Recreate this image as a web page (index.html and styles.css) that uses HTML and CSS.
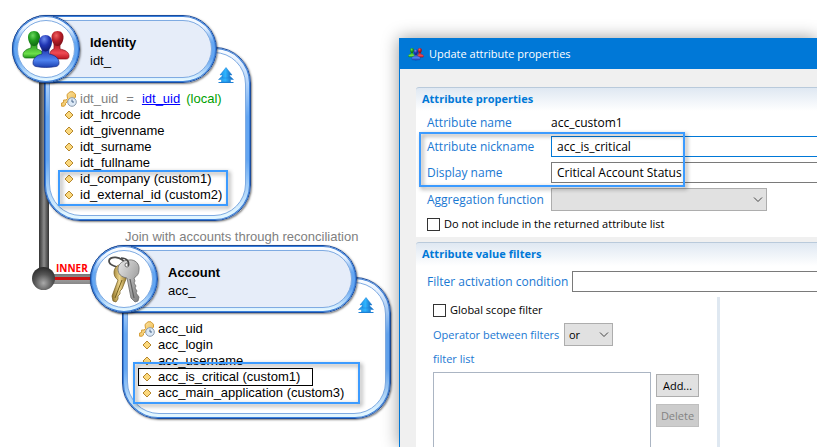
FILE: index.html
```html
<!DOCTYPE html>
<html lang="en">
<head>
<meta charset="utf-8">
<title>Update attribute properties</title>
<link rel="stylesheet" href="styles.css">
</head>
<body>
<svg class="defs" aria-hidden="true">
  <defs>
    <radialGradient id="gG" cx=".4" cy=".3" r=".8"><stop offset="0" stop-color="#6bd860"/><stop offset=".45" stop-color="#1f9a1c"/><stop offset="1" stop-color="#0c5a10"/></radialGradient>
    <radialGradient id="gR" cx=".4" cy=".3" r=".8"><stop offset="0" stop-color="#f06060"/><stop offset=".45" stop-color="#b81e28"/><stop offset="1" stop-color="#6d0a12"/></radialGradient>
    <radialGradient id="gB" cx=".4" cy=".25" r=".85"><stop offset="0" stop-color="#6d8cf0"/><stop offset=".45" stop-color="#2136b4"/><stop offset="1" stop-color="#0c1560"/></radialGradient>
    <linearGradient id="tG" x1="0" y1="0" x2="0" y2="1"><stop offset="0" stop-color="#2a9a22"/><stop offset=".7" stop-color="#6de04a"/><stop offset="1" stop-color="#1f8f1a"/></linearGradient>
    <linearGradient id="tR" x1="0" y1="0" x2="0" y2="1"><stop offset="0" stop-color="#b31824"/><stop offset=".6" stop-color="#f04a54"/><stop offset="1" stop-color="#b81420"/></linearGradient>
    <linearGradient id="tB" x1="0" y1="0" x2="0" y2="1"><stop offset="0" stop-color="#2038b0"/><stop offset=".6" stop-color="#4f83f0"/><stop offset="1" stop-color="#1c40b0"/></linearGradient>
    <linearGradient id="arrow" x1="0" y1="0" x2="1" y2="0"><stop offset="0" stop-color="#1c8ee0"/><stop offset=".45" stop-color="#2fb4ff"/><stop offset="1" stop-color="#1463b8"/></linearGradient>
    <linearGradient id="gold" x1="0" y1="0" x2="1" y2="1"><stop offset="0" stop-color="#fff0b8"/><stop offset="1" stop-color="#e9ae3c"/></linearGradient>
    <linearGradient id="silver" x1="0" y1="0" x2="1" y2="1"><stop offset="0" stop-color="#e8e8e8"/><stop offset=".5" stop-color="#b4b4b4"/><stop offset="1" stop-color="#7e7e7e"/></linearGradient>
    <linearGradient id="brass" x1="0" y1="0" x2="1" y2="0"><stop offset="0" stop-color="#8f7226"/><stop offset=".5" stop-color="#ecd48c"/><stop offset="1" stop-color="#8f7226"/></linearGradient>
    <symbol id="people" viewBox="0 0 48 38">
      <path d="M32 14h6v5c5 1 9 3 9 7 0 2-1 3-3 3H27c1-6 1-9 5-10z" fill="url(#tR)" stroke="#8e1019" stroke-width=".7"/>
      <path d="M35.500 1c4 0 6 3 6 6 0 4-2 9-6 9s-6-5-6-9C29.500 4 31.500 1 35.500 1z" fill="url(#gR)"/>
      <path d="M9 14h6v5c4 1 7 4 7 9H4c-2 0-3-1-3-3 0-4 4-6 8-7z" fill="url(#tG)" stroke="#11700f" stroke-width=".7"/>
      <path d="M12 1c4 0 6 3 6 6 0 4-2 9-6 9s-6-5-6-9C6 4 8 1 12 1z" fill="url(#gG)"/>
      <path d="M20 19h7v5c6 1 10 4 10 9 0 2-1 3-3 3.500-7 1.300-14 1.300-20 0-2-.5-3-1.500-3-3.500 0-5 4-8 9-9z" fill="url(#tB)" stroke="#152a84" stroke-width=".7"/>
      <path d="M23.500 5c4 0 6.500 3 6.500 6.500 0 5-3.300 10-6.500 10s-6.500-5-6.500-10C17 8 19.500 5 23.500 5z" fill="url(#gB)"/>
    </symbol>
    <symbol id="keys" viewBox="0 0 36 50">
      <path d="M21 11C15 1 3 2 3 7c0 4 9 8 19 6" fill="none" stroke="#4c4c4c" stroke-width="1.800"/>
      <path d="M13 11c-6 2-7 11-1 15L6 42l1 5 3 1 2-3v-3l2-2v-3l2-2 4-10 1-12z" fill="url(#brass)" stroke="#71591c" stroke-width=".7"/>
      <path d="M16 26L9 44" stroke="#75601e"/>
      <path d="M23 6c6-1 11 4 10 10 0 4-2 6-5 8l1 3-1 2 2 3-1 2 2 3-1 2 3 4-1 4-3 1-4-4-4-20c-6-1-9-4-9-9 0-5 5-9 11-9z" fill="url(#silver)" stroke="#6c6c6c" stroke-width=".8"/>
      <path d="M24 25l4 19" stroke="#5f5f5f" stroke-width="1.200"/>
      <circle cx="21" cy="11" r="2" fill="#fff" stroke="#555" stroke-width=".8"/>
      <path d="M15 4c6 0 9 4 7 8" fill="none" stroke="#444" stroke-width="1.500"/>
    </symbol>
    <symbol id="up" viewBox="0 0 16 16">
      <path d="M8 5.500l7.500 7H12.500V15H3.500v-2.500H.5z" fill="url(#arrow)" stroke="#1c7fd4" stroke-width=".5"/>
      <path d="M8 .5L14 8H11.500v3H4.500V8H2z" fill="url(#arrow)" stroke="#1c7fd4" stroke-width=".5"/>
      <path d="M.5 15.500h15" stroke="#1c7fd4"/>
    </symbol>
    <symbol id="diamond" viewBox="0 0 16 16">
      <path d="M8 4l4 4-4 4-4-4z" fill="#fbd87c" stroke="#b5862c" stroke-linejoin="round"/>
    </symbol>
    <symbol id="keyclock" viewBox="0 0 16 16">
      <path d="M6 3.500L9 .8h3l2.500 2.500v3L12 8H9l-4.500 4.500V14L3 15.200H.6V12l2-.5V9h2.500L6.500 7.500z" fill="url(#gold)" stroke="#d59c33"/>
      <circle cx="11" cy="11" r="4.300" fill="#dce9f6" stroke="#8a9aad"/>
      <path d="M11 8.500V11h2" fill="none" stroke="#47648a"/>
    </symbol>
  </defs>
</svg>

<main class="canvas">
  <div class="pipe pipe-down"></div>
  <div class="pipe pipe-across"></div>
  <div class="joint"></div>
  <span class="join-type">INNER</span>
  <span class="join-note">Join with accounts through reconciliation</span>

  <section class="node identity">
    <div class="shell head">
      <header class="shell-in title"><h2>Identity</h2><p>idt_</p></header>
    </div>
    <div class="shell badge"><div class="shell-in"><svg class="people"><use href="#people"/></svg></div></div>
    <div class="shell body">
      <div class="shell-in">
        <svg class="up"><use href="#up"/></svg>
        <ul>
          <li><svg><use href="#keyclock"/></svg><span class="muted">idt_uid</span><span class="eq">=</span><a href="#idt_uid">idt_uid</a><span class="local">(local)</span></li>
          <li><svg><use href="#diamond"/></svg>idt_hrcode</li>
          <li><svg><use href="#diamond"/></svg>idt_givenname</li>
          <li><svg><use href="#diamond"/></svg>idt_surname</li>
          <li><svg><use href="#diamond"/></svg>idt_fullname</li>
          <li><svg><use href="#diamond"/></svg>id_company (custom1)</li>
          <li><svg><use href="#diamond"/></svg>id_external_id (custom2)</li>
        </ul>
      </div>
    </div>
  </section>

  <section class="node account">
    <div class="shell head">
      <header class="shell-in title"><h2>Account</h2><p>acc_</p></header>
    </div>
    <div class="shell badge"><div class="shell-in"><svg class="keys"><use href="#keys"/></svg></div></div>
    <div class="shell body">
      <div class="shell-in">
        <svg class="up"><use href="#up"/></svg>
        <ul>
          <li><svg><use href="#keyclock"/></svg>acc_uid</li>
          <li><svg><use href="#diamond"/></svg>acc_login</li>
          <li><svg><use href="#diamond"/></svg>acc_username</li>
          <li class="selected"><svg><use href="#diamond"/></svg>acc_is_critical (custom1)</li>
          <li><svg><use href="#diamond"/></svg>acc_main_application (custom3)</li>
        </ul>
      </div>
    </div>
  </section>

  <div class="mark mark-identity"></div>
  <div class="mark mark-account"></div>
</main>

<form class="dialog">
  <header class="titlebar"><svg><use href="#people"/></svg><h1>Update attribute properties</h1></header>
  <div class="content">
    <section class="group">
      <h2>Attribute properties</h2>
      <div class="fields">
        <span class="caption">Attribute name</span><span class="value">acc_custom1</span>
        <label for="nick">Attribute nickname</label><input id="nick" class="text focus" type="text" value="acc_is_critical">
        <label for="disp">Display name</label><input id="disp" class="text" type="text" value="Critical Account Status">
        <label for="agg">Aggregation function</label>
        <div class="pick wide"><select id="agg"><option></option></select><svg viewBox="0 0 10 6"><path d="M1 .5l4 4 4-4"/></svg></div>
        <div class="check"><input id="skip" type="checkbox"><label for="skip">Do not include in the returned attribute list</label></div>
      </div>
    </section>
    <section class="group filters">
      <h2>Attribute value filters</h2>
      <div class="condition"><label for="cond">Filter activation condition</label><input id="cond" class="text" type="text"></div>
      <div class="split">
        <div class="pane">
          <div class="check"><input id="global" type="checkbox"><label for="global">Global scope filter</label></div>
          <div class="operator"><label for="op">Operator between filters</label>
            <div class="pick"><select id="op"><option>or</option><option>and</option></select><svg viewBox="0 0 10 6"><path d="M1 .5l4 4 4-4"/></svg></div>
          </div>
          <label for="list">filter list</label>
          <div class="listing">
            <select id="list" size="5"></select>
            <div class="buttons"><button type="button">Add...</button><button type="button" disabled>Delete</button></div>
          </div>
        </div>
      </div>
    </section>
  </div>
  <div class="mark mark-fields"></div>
</form>
</body>
</html>
```
FILE: styles.css
```css
* { box-sizing: border-box; }
body {
  margin: 0;
  min-height: 100vh;
  position: relative;
  overflow: hidden;
  background: #fff;
  color: #000;
  font: 13px/16px "Liberation Sans", Arial, sans-serif;
}
h1, h2, p, ul { margin: 0; padding: 0; }
.defs { position: absolute; width: 0; height: 0; }

/* Diagram canvas */
.canvas { position: absolute; inset: 0; }
.pipe { position: absolute; }
.pipe-down {
  left: 39px; top: 70px; width: 10px; height: 200px;
  background: linear-gradient(90deg, #333 0, #555 20%, #8c8c8c 50%, #555 80%, #333 100%);
}
.pipe-across {
  left: 50px; top: 274px; width: 50px; height: 10px;
  background: linear-gradient(#777 0, #888 30%, #d01010 31%, #d01010 60%, #999 61%, #888 100%);
}
.joint {
  position: absolute; left: 32px; top: 267px; width: 23px; height: 23px;
  border-radius: 50%;
  background: radial-gradient(circle at 50% 70%, #aaa 0, #555 45%, #2c2c2c 80%);
}
.join-type {
  position: absolute; left: 56px; top: 260px;
  color: #f00; font: bold 10px/16px "Open Sans", sans-serif;
}
.join-note { position: absolute; left: 125px; top: 229px; color: #808080; white-space: nowrap; }

.node { position: absolute; }
.identity { left: 12px; top: 15px; width: 239px; }
.account { left: 90px; top: 245px; width: 301px; }

.shell {
  padding: 4px;
  border: 1px solid #1a4b9c;
  border-radius: 36px;
  background: linear-gradient(#fff 0, #e6f1ff 12px, #64a6f2 40%, #64a6f2 65%, #e2f6ff 96%);
  box-shadow: inset 0 0 0 1px #3a80dc, 1px 1px 2px rgba(0, 0, 0, .5);
}
.shell-in {
  border: 1px solid #7fabe2;
  border-radius: 32px;
  background: #fff;
}
.head { position: relative; z-index: 1; margin-right: 34px; height: 68px; }
.title { height: 100%; padding: 13px 0 0 72px; background: #e6edf9; }
.title h2 { font-size: 13px; line-height: 18px; }
.title p { line-height: 18px; }
.badge { position: absolute; z-index: 2; left: 0; top: 0; width: 68px; height: 68px; }
.badge .shell-in { height: 100%; display: grid; place-items: center; }
.people { width: 48px; height: 38px; }
.keys { width: 36px; height: 50px; }
.body { position: relative; margin: -36px 0 0 32px; }
.body .shell-in { padding: 38px 6px 12px 11px; }
.up { position: absolute; right: 16px; top: 19px; width: 16px; height: 16px; }
.node ul { list-style: none; }
.node li { display: flex; align-items: center; height: 16px; white-space: nowrap; }
.node li svg { width: 16px; height: 16px; margin-right: 3px; flex: none; }
.muted { color: #808080; }
.eq { color: #808080; margin: 0 8px; }
.node a { color: #00f; }
.local { color: #00a000; margin-left: 6px; }
.selected { outline: 1px solid #000; width: 173px; }

.mark {
  position: absolute;
  border: 2px solid #3c9bff;
  filter: drop-shadow(2px 2px 2px rgba(0, 0, 0, .45));
}
.mark-identity { left: 58px; top: 170px; width: 170px; height: 36px; }
.mark-account { left: 133px; top: 362px; width: 227px; height: 42px; }
.mark-fields { left: 19px; top: 94px; width: 266px; height: 55px; }

/* Dialog window */
.dialog {
  position: absolute; left: 399px; top: 38px; right: 0; bottom: 0;
  display: flex; flex-direction: column;
  border-left: 1px solid #0078d7;
  background: #f0f0f0;
  box-shadow: 0 0 16px rgba(0, 0, 0, .4);
  font: 11px/16px "Open Sans", sans-serif;
}
.titlebar {
  flex: none;
  display: flex; align-items: center; gap: 5px;
  height: 31px; padding-left: 8px;
  background: #0078d7; color: #fff;
}
.titlebar svg { width: 16px; height: 14px; }
.titlebar h1 { font-size: 11px; font-weight: 400; }
.content { flex: 1; min-height: 0; display: flex; flex-direction: column; gap: 5px; padding: 18px 0 0 16px; }
.group {
  flex: none;
  border-top: 1px solid #b9cadb;
  border-top-left-radius: 3px;
  background: linear-gradient(#dfe8f2, #fff 23px);
}
.group h2 { height: 23px; padding: 2px 6px; color: #0078d7; font-size: 11px; line-height: 18px; }
.dialog label, .caption { color: #1a78d2; white-space: nowrap; }
.fields {
  display: grid; grid-template-columns: 124px 1fr; gap: 5px 0; align-items: center;
  padding: 4px 0 5px 11px;
  font-size: 12px;
}
.text {
  width: 100%; height: 21px; padding: 0 5px;
  border: 1px solid #7a7a7a; border-right: 0; background: #fff; color: #000;
  font: inherit; outline: 0; border-radius: 0;
}
.focus { border-color: #0078d7; }
.pick { position: relative; flex: none; width: 49px; height: 23px; }
.wide { width: 216px; }
.pick select {
  appearance: none; width: 100%; height: 100%; padding: 0 4px;
  border: 1px solid #adadad; border-radius: 0; background: #e1e1e1; color: #000; font: inherit;
}
.pick svg {
  position: absolute; right: 4px; top: 9px; width: 10px; height: 6px;
  fill: none; stroke: #444; pointer-events: none;
}
.check { display: flex; align-items: center; gap: 4px; grid-column: 1 / -1; height: 16px; font-size: 11px; }
.check input {
  appearance: none; margin: 0; width: 13px; height: 13px;
  border: 1px solid #333; background: #fff;
}
.dialog .check label { color: #000; }
.filters { flex: 1; min-height: 0; display: flex; flex-direction: column; }
.condition {
  display: grid; grid-template-columns: 145px 1fr; align-items: center;
  padding: 5px 0 5px 11px; font-size: 12px;
}
.split { flex: 1; min-height: 0; display: flex; }
.pane {
  width: 304px; padding: 5px 18px 0 17px;
  display: flex; flex-direction: column; gap: 5px;
  border-right: 3px solid #dfe8f1;
}
.operator { display: flex; align-items: center; justify-content: space-between; padding-right: 86px; }
.listing { flex: 1; min-height: 0; display: flex; gap: 5px; }
.listing select {
  flex: 1; height: auto; border: 1px solid #abb5c3; border-bottom: 0; border-radius: 0;
  background: #fff; overflow: hidden; outline: 0;
}
.buttons { display: flex; flex-direction: column; gap: 7px; padding-top: 2px; width: 43px; }
.buttons button {
  flex: none; height: 23px; padding: 0;
  border: 1px solid #adadad; background: #e1e1e1; color: #000; font: inherit;
}
.buttons button:disabled { border-color: #bfbfbf; background: #ccc; color: #838383; }
```
